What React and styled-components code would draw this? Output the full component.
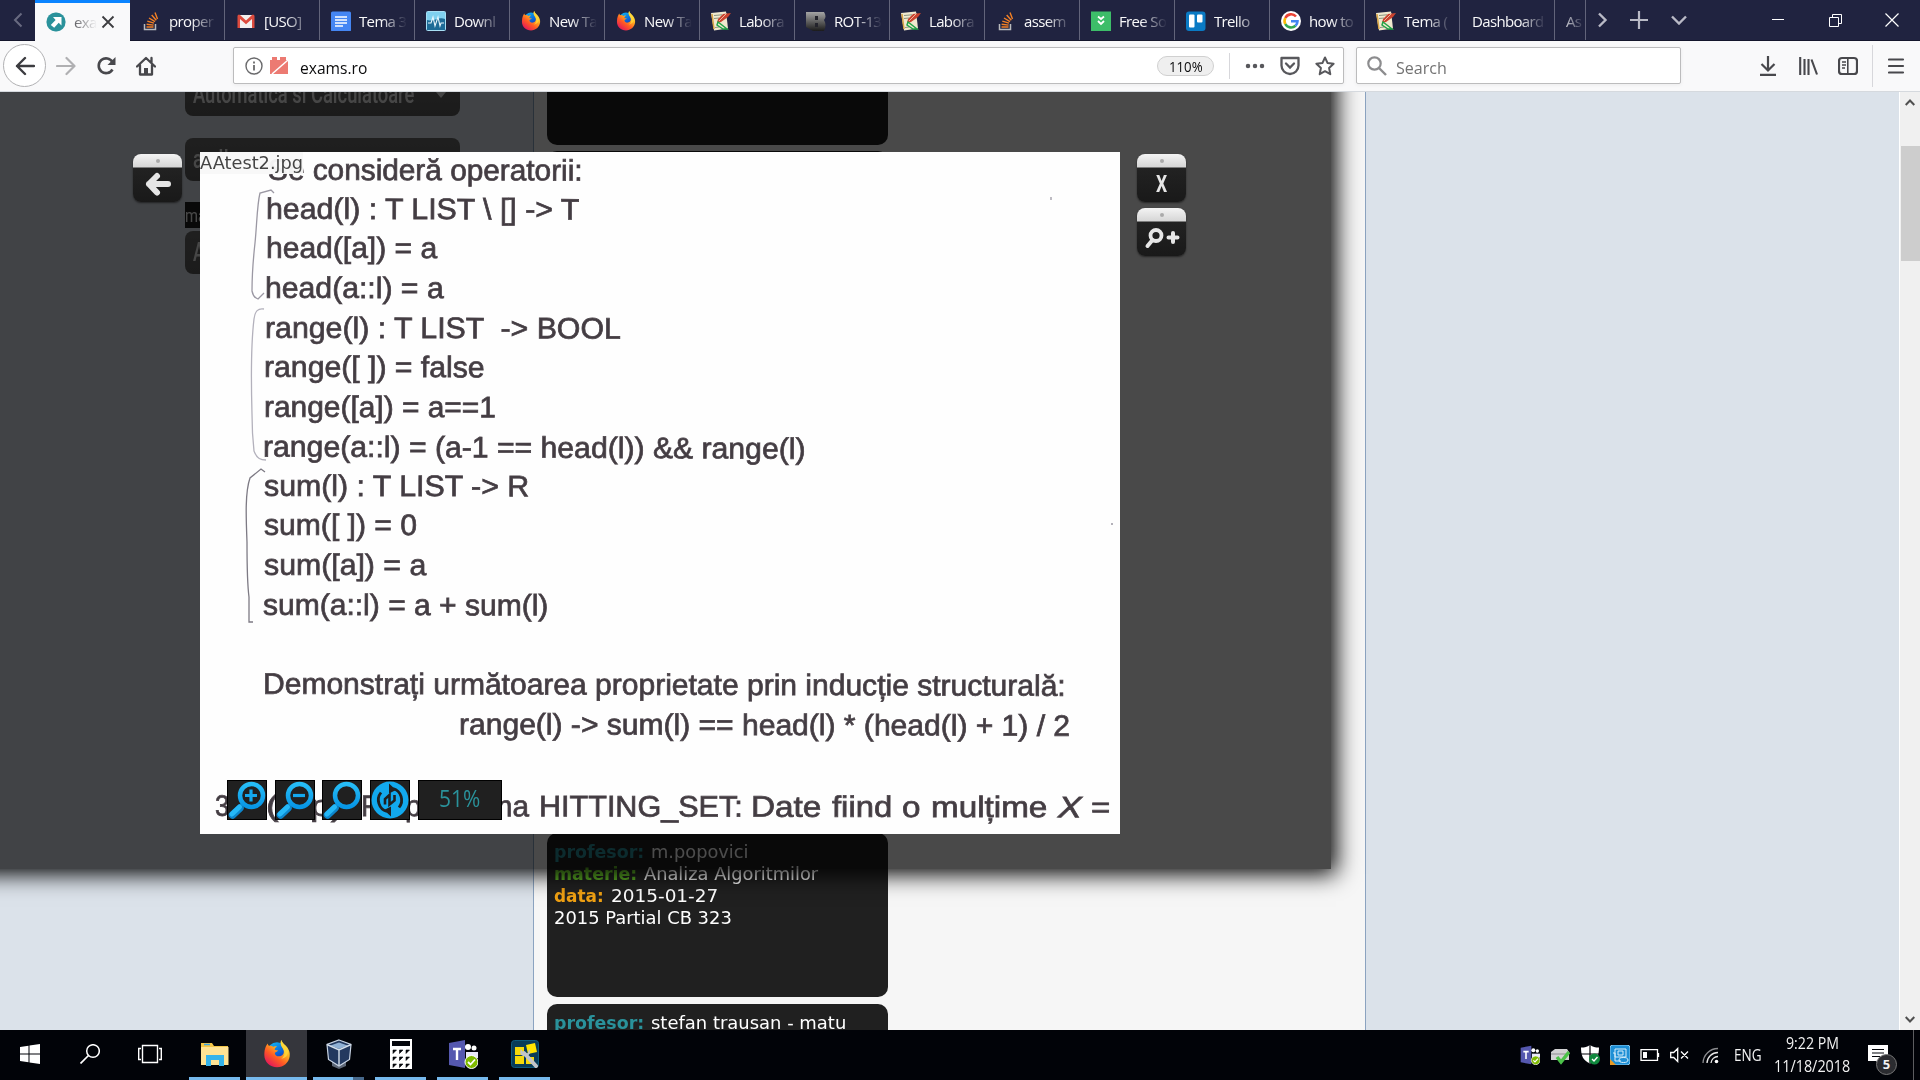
import React, { useLayoutEffect, useRef, useState } from 'react';
import styled, { createGlobalStyle } from 'styled-components';

const GlobalStyle = createGlobalStyle`
  * { box-sizing: border-box; }
  body { margin: 0; overflow: hidden; font-family: "Open Sans", "Noto Sans", sans-serif; }
  svg { display: block; flex: none; }
`;

/* ---------- text that is condensed to a known width ---------- */
const FitBox = styled.span`
  display: inline-block;
  flex: none;
  white-space: pre;
  margin-left: ${(p) => p.$ml || 0}px;
`;
const FitInner = styled.span`
  display: inline-block;
  transform-origin: 0 50%;
`;
function Fit({ width, ml, children }) {
  const ref = useRef(null);
  const [scale, setScale] = useState(1);
  useLayoutEffect(() => {
    setScale(width / ref.current.offsetWidth);
  }, [width]);
  return (
    <FitBox $ml={ml} style={{ width }}>
      <FitInner ref={ref} style={{ transform: `scaleX(${scale})` }}>{children}</FitInner>
    </FitBox>
  );
}

/* ---------- icons ---------- */
const Glyph = ({ w = 20, h = w, vb = `0 0 ${w} ${h}`, children, ...rest }) => (
  <svg width={w} height={h} viewBox={vb} fill="none" {...rest}>{children}</svg>
);

const Firefox = ({ size = 20 }) => (
  <Glyph w={size} vb="0 0 32 32">
    <defs>
      <linearGradient id="ffBody" x1="0.85" y1="0.05" x2="0.2" y2="0.95">
        <stop offset="0" stopColor="#fff04a" />
        <stop offset="0.35" stopColor="#ffb01f" />
        <stop offset="0.65" stopColor="#ff5a24" />
        <stop offset="1" stopColor="#e3175b" />
      </linearGradient>
      <linearGradient id="ffGlobe" x1="0.2" y1="0" x2="0.7" y2="1">
        <stop offset="0" stopColor="#0fb4f5" />
        <stop offset="0.6" stopColor="#0a62d8" />
        <stop offset="1" stopColor="#2a2a9a" />
      </linearGradient>
    </defs>
    <circle cx="16" cy="13.5" r="11" fill="url(#ffGlobe)" />
    <path d="M3 8c1-2 1.500-3 2.200-4 .3 1.200.8 2 1.500 2.600 2-.4 4 .2 5.300 1.200 1.500-.6 3-.7 4-.4-1.800 1-2.600 2.300-2.600 3.600 1 .6 2.600.4 3.600.6-.3 1.600-2.600 2-3.500 3.200.2 2.800 2.800 4.400 6 3.700 4.200-1 5.200-5 3.600-8-1.200-2.800-3-4-3-7.500 0-1 .4-2 1-3 .8 4 4.500 5 6.800 8.700C30 12 31 15 30.500 18.500 29.500 26 23.500 31 16 31 8 31 1.500 25 1.500 17c0-3.500.5-6.500 1.500-9z" fill="url(#ffBody)" />
    <path d="M21.100 0c-2.100 5 .9 7.500 2.500 11 2 4.500.5 8.500-3 10.500 5-.5 8.400-4 8-9C28 7 22.500 6 21.100 0z" fill="#ffd83a" opacity=".8" />
  </Glyph>
);
const ExamsIcon = () => (
  <Glyph vb="0 0 20 20">
    <rect x=".5" y=".5" width="19" height="19" rx="9" fill="#2a929b" />
    <path d="M7 5h8.500v8.500l-2.800-2.800-4.500 5-3.400-2.800 4.800-5z" fill="#fff" />
  </Glyph>
);
const StackIcon = () => (
  <Glyph vb="0 0 20 20">
    <path d="M3.500 13v5.500h11V13" stroke="#b9babd" strokeWidth="1.500" />
    <path d="M5.500 16h7M5.600 13.300l7 .8M6.300 10.200l6.700 2M8 7l6 3.600M10.700 4l4.600 5.200M14 1.500l2.500 6.500" stroke="#f48024" strokeWidth="1.400" />
  </Glyph>
);
const GmailIcon = () => (
  <Glyph vb="0 0 20 20">
    <rect x="2" y="4" width="16" height="13" rx="1" fill="#f3f0ef" />
    <path d="M1.500 5a1.500 1.500 0 0 1 2.500-1l6 5.500L16 4a1.500 1.500 0 0 1 2.500 1v12H16V8l-6 5.200L4 8v9H1.500z" fill="#dd4b3e" />
  </Glyph>
);
const DocsIcon = () => (
  <Glyph vb="0 0 20 20">
    <rect y=".5" width="20" height="20" rx="1.500" fill="#4586f3" />
    <path d="M4 6h12M4 9h12M4 12h12M4 15h8" stroke="#fff" strokeWidth="1.500" />
  </Glyph>
);
const WaveIcon = () => (
  <Glyph vb="0 0 20 20">
    <rect x=".5" y=".5" width="19" height="19" rx="1" fill="#1d6b97" stroke="#a8dff4" />
    <path d="M1 1h18v7c-6-3-12 3-18 1z" fill="#7fd0ef" />
    <path d="M2 12h3l2-6 2 9 3-9 2 9 1-3h3" stroke="#e9f7fd" strokeWidth="1.100" />
  </Glyph>
);
const NotesIcon = () => (
  <Glyph vb="0 0 20 20">
    <path d="M0 2l15-1.500 2 17L3 19.500z" fill="#f0e9cf" />
    <path d="M3 4.500l8-.7M3 7.500l5-.5M4 16.500l4-.5" stroke="#8a957f" />
    <path d="M20 2L12 3 7 8l-1 4 4-1 7-5z" fill="#c9432f" />
    <path d="M15.500 2.500L8 10" stroke="#f0b49a" strokeWidth="1" />
    <path d="M7 11l9 7h-4l-6-4z" stroke="#21a447" strokeWidth="1.500" />
    <path d="M1 3l2 15" stroke="#d8a444" strokeWidth="1.500" />
  </Glyph>
);
const RotIcon = () => (
  <Glyph vb="0 0 20 20">
    <defs>
      <linearGradient id="rot" x1="0" y1="0" x2="0" y2="1">
        <stop offset="0" stopColor="#a5a5a5" /><stop offset="1" stopColor="#1b1b1b" />
      </linearGradient>
    </defs>
    <path d="M0 1h18c2 3 2 6 0 8 2 3 2 7 0 11H7L0 16z" fill="url(#rot)" />
    <path d="M9 5h3v4H9zM9 12h3v4H9z" fill="#24242c" />
  </Glyph>
);
const GreenIcon = () => (
  <Glyph vb="0 0 20 20">
    <rect y=".5" width="20" height="19.500" fill="#3dbd69" />
    <path d="M7 5.500l3 2.500 3-2.500M7 10l3 3 3-3" stroke="#fff" strokeWidth="1.800" />
  </Glyph>
);
const TrelloIcon = () => (
  <Glyph vb="0 0 20 20">
    <rect y=".5" width="19.500" height="19.500" rx="3" fill="#0a7ac4" />
    <rect x="3" y="3.500" width="5.500" height="13" rx="1" fill="#fff" />
    <rect x="11" y="3.500" width="5.500" height="8" rx="1" fill="#fff" />
  </Glyph>
);
const GoogleIcon = () => (
  <Glyph vb="0 0 20 20">
    <circle cx="10" cy="10" r="10" fill="#fff" />
    <path d="M15 5.500A6.500 6.500 0 0 0 4.300 7" stroke="#ea4335" strokeWidth="2.600" />
    <path d="M4.300 7a6.500 6.500 0 0 0 0 6" stroke="#fbbc05" strokeWidth="2.600" />
    <path d="M4.300 13a6.500 6.500 0 0 0 10.200 1.700" stroke="#34a853" strokeWidth="2.600" />
    <path d="M14.500 14.700a6.300 6.300 0 0 0 2-4.500H10" stroke="#4285f4" strokeWidth="2.600" />
  </Glyph>
);

/* ---------- window chrome ---------- */
const Screen = styled.div`
  width: 1920px;
  height: 1080px;
  display: flex;
  flex-direction: column;
  overflow: hidden;
`;
const TabStrip = styled.div`
  height: 41px;
  flex: none;
  display: flex;
  background: #202340;
  border-bottom: 1px solid #14162c;
  color: #f9f9fa;
`;
const StripArrow = styled.div`
  width: 35px;
  display: flex;
  align-items: center;
  justify-content: center;
`;
const Tab = styled.div`
  width: ${(p) => p.$w || 95}px;
  height: ${(p) => (p.$active ? 41 : 40)}px;
  flex: none;
  display: flex;
  align-items: center;
  padding: 2px 0 0 11px;
  overflow: hidden;
  background: ${(p) => (p.$active ? '#f9f9fa' : 'transparent')};
  color: ${(p) => (p.$active ? '#4a4a4f' : '#f9f9fa')};
  border-top: ${(p) => (p.$active ? '3px solid #0a84ff' : '0')};
  padding-top: ${(p) => (p.$active ? 0 : 2)}px;
  border-right: ${(p) => (p.$active ? '0' : '1px solid #62647a')};
`;
const TabTitle = styled.span`
  width: ${(p) => p.$w || 45}px;
  margin-left: ${(p) => p.$ml ?? 8}px;
  overflow: hidden;
  white-space: nowrap;
  font-size: 15px;
  letter-spacing: -0.65px;
  mask-image: linear-gradient(to right, #000 ${(p) => (p.$w || 45) - 26}px, transparent 100%);
`;
const StripTools = styled.div`
  flex: 1;
  display: flex;
  align-items: center;
  padding-left: 11px;
`;
const ChromeGap = styled.span`
  width: ${(p) => p.$w}px;
  flex: none;
`;

const Toolbar = styled.div`
  height: 51px;
  flex: none;
  display: flex;
  align-items: center;
  background: #f9f9fa;
  border-bottom: 1px solid #d5d9de;
  padding: 0 15px 1px 3px;
`;
const BackButton = styled.div`
  width: 43px;
  height: 43px;
  border: 1px solid #b1b1b3;
  border-radius: 50%;
  background: #fff;
  display: grid;
  place-items: center;
  margin-right: 10px;
`;
const NavIcons = styled.div`
  display: flex;
  gap: 20px;
  width: 177px;
  align-items: center;
`;
const Field = styled.div`
  width: ${(p) => p.$w}px;
  height: 37px;
  flex: none;
  display: flex;
  align-items: center;
  background: #fff;
  border: 1px solid #bcbcbd;
  border-radius: 2px;
  box-shadow: 0 1px 4px rgba(0, 0, 0, 0.06);
  padding: 0 8px 0 ${(p) => p.$pl}px;
  margin-right: 12px;
  font-size: 17px;
  color: ${(p) => p.$color};
`;
const FieldText = styled.span`
  padding-top: 3px;
`;
const Zoomed = styled.span`
  width: 57px;
  height: 20px;
  border-radius: 10px;
  border: 1px solid #d0d0d0;
  background: #efefef;
  display: grid;
  place-items: center;
  font-size: 14px;
  line-height: 19px;
  margin-left: auto;
`;
const Divider = styled.span`
  width: 1px;
  height: ${(p) => p.$h}px;
  background: #d7d7db;
  margin: 0 15px 0 ${(p) => p.$ml ?? 15}px;
`;
const FieldActions = styled.div`
  display: flex;
  gap: 15px;
  align-items: center;
`;
const RightTools = styled.div`
  display: flex;
  align-items: center;
  margin-left: auto;
`;

/* ---------- page ---------- */
const Viewport = styled.div`
  height: 938px;
  flex: none;
  display: flex;
  position: relative;
  overflow: hidden;
  background: #dbe2ea;
`;
const Filters = styled.aside`
  width: 533px;
  flex: none;
  padding-left: 185px;
  display: flex;
  flex-direction: column;
  font-family: Roboto, sans-serif;
`;
const Select = styled.div`
  width: 275px;
  height: 43px;
  flex: none;
  border-radius: 8px;
  background: linear-gradient(#6a6a6a, #5c5c5c);
  color: #ececec;
  display: flex;
  align-items: center;
  padding: 0 14px 0 8px;
  font-size: 25px;
  font-weight: 500;
  margin-top: ${(p) => p.$mt}px;
  justify-content: space-between;
`;
const FilterLabel = styled.div`
  width: 64px;
  height: 26px;
  background: #202020;
  color: #f0f0f0;
  font-size: 19px;
  line-height: 28px;
  margin-top: 21px;
`;
const Content = styled.main`
  width: 833px;
  flex: none;
  background: #f6f6f6;
  border: solid #8ba3c0;
  border-width: 0 1px;
  padding-left: 13px;
`;
const Card = styled.article`
  width: 341px;
  height: 164px;
  border-radius: 10px;
  background: #202020;
  color: #fff;
  padding: 8px 7px;
  margin-bottom: 6.500px;
  font-family: Verdana, "DejaVu Sans", sans-serif;
  font-size: 17.600px;
  line-height: 22px;
`;
const CardList = styled.div`
  margin-top: -111.500px;
`;
const CardLine = styled.div`
  height: 22px;
  display: flex;
`;
const Key = styled.b`
  color: ${(p) => p.$c};
  margin-right: 7px;
`;
const Scrollbar = styled.div`
  width: 21px;
  margin-left: auto;
  background: #f0f0f0;
  border-left: 1px solid #fff;
  display: flex;
  flex-direction: column;
  align-items: center;
  padding: 7px 0 7px;
`;
const Thumb = styled.div`
  width: 19px;
  height: 115px;
  background: #cdcdcd;
  margin: 40px 0 auto;
`;

/* ---------- viewer ---------- */
const Lightbox = styled.section`
  position: absolute;
  left: -40px;
  top: -40px;
  width: 1371px;
  height: 817px;
  padding: 100px 0 0 173px;
  display: flex;
  background: rgba(0, 0, 0, 0.7);
  box-shadow: 5px 5px 22px #000;
`;
const Rail = styled.div`
  display: flex;
  flex-direction: column;
  gap: 6px;
  padding-top: 2px;
  width: ${(p) => p.$w}px;
  flex: none;
  align-items: flex-end;
`;
const RailButton = styled.div`
  width: 49px;
  height: 48px;
  flex: none;
  border-radius: 8px;
  background: linear-gradient(#f4f4f4 0, #d6d6d6 13px, #222 14px, #191919 100%);
  box-shadow: 0 1px 2px rgba(0, 0, 0, 0.5);
  display: flex;
  flex-direction: column;
  align-items: center;
  padding-top: 5px;
  color: #e6e6e6;
`;
const Hole = styled.i`
  width: 4px;
  height: 4px;
  border-radius: 50%;
  background: #aaa;
  margin-bottom: ${(p) => p.$mb ?? 8}px;
`;
const CloseMark = styled.b`
  font: 700 24px/24px Roboto, sans-serif;
`;
const Scan = styled.div`
  position: relative;
  width: 920px;
  height: 682px;
  flex: none;
  overflow: hidden;
  background: #fefefe;
  color: #433c42;
  font-family: "Liberation Sans", Arial, sans-serif;
  font-size: 29.500px;
  line-height: 30px;
  -webkit-text-stroke: 0.750px #4a4349;
`;
const ScanLine = styled.div`
  display: flex;
  align-items: flex-end;
  height: ${(p) => p.$h}px;
  transform: rotate(${(p) => p.$r ?? 0.15}deg);
  transform-origin: 200px 100%;
`;
const Brackets = styled.svg`
  position: absolute;
  left: 0;
  top: 0;
`;
const FileName = styled.div`
  position: absolute;
  left: 0;
  top: 0;
  height: 22px;
  background: rgba(248, 248, 248, 0.96);
  color: #444;
  -webkit-text-stroke: 0;
  font: 17.600px/23px Verdana, "DejaVu Sans", sans-serif;
`;
const ZoomBar = styled.div`
  position: absolute;
  left: 27px;
  top: 628px;
  display: flex;
  gap: 7.700px;
`;
const ZoomButton = styled.div`
  width: ${(p) => p.$w || 40}px;
  height: 40px;
  border: 1px solid #000;
  background: #202020;
  color: #2a929b;
  display: grid;
  place-items: center;
  -webkit-text-stroke: 0;
  font: 24px/32px "Open Sans", sans-serif;
  padding-bottom: ${(p) => (p.$w ? 4 : 0)}px;
`;
const Italic = styled.i``;

const LINES = [
  { b: 180, parts: [[268, 315, 'Se consideră operatorii:']] },
  { b: 219, parts: [[266, 313, 'head(l) : T LIST \\ [] -> T']] },
  { b: 258, parts: [[266, 171, 'head([a]) = a']] },
  { b: 298, parts: [[265, 179, 'head(a::l) = a']] },
  { b: 338, parts: [[265, 356, 'range(l) : T LIST  -> BOOL']] },
  { b: 377, parts: [[264, 221, 'range([ ]) = false']] },
  { b: 417, parts: [[264, 232, 'range([a]) = a==1']] },
  { b: 457, r: 0.25, parts: [[263, 542, 'range(a::l) = (a-1 == head(l)) && range(l)']] },
  { b: 495.5, parts: [[264, 265, 'sum(l) : T LIST -> R']] },
  { b: 535, parts: [[264, 153, 'sum([ ]) = 0']] },
  { b: 575, parts: [[264, 162, 'sum([a]) = a']] },
  { b: 615, parts: [[263, 285, 'sum(a::l) = a + sum(l)']] },
  { b: 694, parts: [[263, 803, 'Demonstrați următoarea proprietate prin inducție structurală:']] },
  { b: 734, parts: [[459, 611, 'range(l) -> sum(l) == head(l) * (head(l) + 1) / 2']] },
  {
    b: 815.5,
    r: 0.1,
    parts: [
      [215, 22, '3.'], [266, 78, '(2 p)'], [361, 39, 'Fie'], [405, 124, 'problema'],
      [539, 204, 'HITTING_SET:'], [751, 70, 'Date'], [832, 60, 'fiind'], [902, 18, 'o'],
      [931, 116, 'mulțime'], [1058, 24, 'X', true], [1091, 19, '='],
    ],
  },
];
const DESCENT = 4.6;

function Page() {
  let prev = 152 - DESCENT;
  return (
    <Scan>
      {LINES.map((l) => {
        const h = l.b - prev;
        prev = l.b;
        let x = 200;
        return (
          <ScanLine key={l.b} $h={h} $r={l.r}>
            {l.parts.map(([left, w, text, it]) => {
              const ml = left - x;
              x = left + w;
              return <Fit key={left} width={w} ml={ml}>{it ? <Italic>{text}</Italic> : text}</Fit>;
            })}
          </ScanLine>
        );
      })}
      <Brackets width="920" height="682" viewBox="200 152 920 682" fill="none" stroke="#9b98a3" strokeWidth="1.300">
        <path d="M274 193l-3-3-11 3c-3 12-3 30-5 50-2 18-3 32-3 48 1 5 3 7 6 8l6-6" />
        <path d="M264 309c-6-1-9 2-10 10-3 25-3 60-2 95 0 15 1 28 2 37 3 8 7 9 12 9" stroke="#b3b1bc" />
        <path d="M265 472l-4-3-11 9c-5 14-4 39-3 64 0 22 0 40 2 55v25h4" stroke="#7d7a84" />
        <path d="M1051 197v3M1111 524h2" />
      </Brackets>
      <FileName><Fit width={103}>AAtest2.jpg</Fit></FileName>
      <ZoomBar>
        <ZoomButton><Magnifier sign="M17 14.500h12M23 8.500v12" /></ZoomButton>
        <ZoomButton><Magnifier sign="M17 14.500h12" /></ZoomButton>
        <ZoomButton><Magnifier solid /></ZoomButton>
        <ZoomButton>
          <Glyph w={38} vb="0 0 38 38">
            <circle cx="19" cy="19" r="18.500" fill="#12a9ee" />
            <path d="M16 30.500A12 12 0 0 1 10 11.500M22 7.500A12 12 0 0 1 28 26.500" stroke="#202020" strokeWidth="2.800" />
            <path d="M18 2.500v10L25 9zM20 35.500v-10L13 29z" fill="#202020" />
            <path d="M14 23.500V18l4.500-4v9.500l5-4V14" stroke="#202020" strokeWidth="2.600" />
          </Glyph>
        </ZoomButton>
        <ZoomButton $w={84}><Fit width={41}>51%</Fit></ZoomButton>
      </ZoomBar>
    </Scan>
  );
}

const Magnifier = ({ sign, solid }) => (
  <Glyph w={38} vb="0 0 38 38">
    <defs>
      <linearGradient id="lens" x1="0" y1="0" x2="0" y2="1">
        <stop offset="0" stopColor="#26bdf7" /><stop offset="1" stopColor="#0796e6" />
      </linearGradient>
    </defs>
    <path d="M12 27L4.500 34" stroke="#0c86cc" strokeWidth="7.500" strokeLinecap="round" />
    <path d="M15 22.500L11 27" stroke="#0c7fc0" strokeWidth="4" />
    <path d="M11.500 26L4 33" stroke="#25b8f7" strokeWidth="5" strokeLinecap="round" />
    <circle cx="23.500" cy="14.500" r="11.500" stroke="url(#lens)" strokeWidth="4.500" fill="#202020" />
    {!solid && <path d={sign} stroke="#14a8ee" strokeWidth="3.200" />}
  </Glyph>
);

/* ---------- taskbar ---------- */
const Taskbar = styled.footer`
  height: 50px;
  flex: none;
  display: flex;
  background: #010308;
  color: #f2f2f2;
`;
const TaskItem = styled.div`
  width: ${(p) => p.$w}px;
  flex: none;
  margin-right: ${(p) => p.$mr ?? 11}px;
  background: ${(p) => (p.$on ? '#35363c' : 'transparent')};
  display: grid;
  grid-template-rows: 1fr 3px;
  place-items: center;
`;
const RunMark = styled.span`
  width: 100%;
  height: 3px;
  background: ${(p) => (p.$stacked ? 'linear-gradient(to right, #76b9ed 40px, #47698c 40px)' : '#76b9ed')};
`;
const Tray = styled.div`
  margin-left: auto;
  width: 400px;
  display: flex;
  align-items: center;
  gap: 10px;
  font-size: 15.500px;
`;
const Clock = styled.div`
  display: flex;
  flex-direction: column;
  align-items: center;
  width: 76px;
  margin-left: 2px;
  line-height: 23px;
`;
const Notices = styled.div`
  display: flex;
  margin: 10px 0 0 8px;
`;
const Count = styled.b`
  width: 21px;
  height: 21px;
  border-radius: 50%;
  border: 1px solid #777;
  background: #2b2c30;
  font-size: 13px;
  line-height: 18px;
  text-align: center;
  margin: 9px 0 0 -12px;
`;
const Peek = styled.span`
  width: 1px;
  height: 50px;
  background: #5c5d60;
  margin-left: 6px;
`;

const Teams = ({ size }) => (
  <Glyph w={size} vb="0 0 30 30">
    <path d="M1 4L17 1v28L1 26z" fill="#5558af" />
    <path d="M5 10h8M9 10v11" stroke="#fff" strokeWidth="2.400" />
    <circle cx="20" cy="8" r="3" fill="#fff" /><circle cx="26" cy="9" r="2.500" fill="#fff" />
    <path d="M18 13h12v6H18z" fill="#e8e8f8" />
    <circle cx="23.500" cy="23" r="6.500" fill="#7fba00" stroke="#fff" />
    <path d="M20 23l2.500 2.500L27 20.500" stroke="#fff" strokeWidth="1.800" />
  </Glyph>
);

const TABS = [
  [StackIcon, 'proper'], [GmailIcon, '[USO] '], [DocsIcon, 'Tema 3'], [WaveIcon, 'Downl'],
  [Firefox, 'New Ta'], [Firefox, 'New Ta'], [NotesIcon, 'Labora'], [RotIcon, 'ROT-13'],
  [NotesIcon, 'Labora'], [StackIcon, 'assem'], [GreenIcon, 'Free So'], [TrelloIcon, 'Trello'],
  [GoogleIcon, 'how to'], [NotesIcon, 'Tema ('],
];

export default function App() {
  return (
    <Screen>
      <GlobalStyle />
      <TabStrip>
        <StripArrow>
          <Glyph w={10} h={16}><path d="M8.500 1.500L2 8l6.500 6.500" stroke="#686a80" strokeWidth="2" /></Glyph>
        </StripArrow>
        <Tab $active>
          <ExamsIcon />
          <TabTitle $w={23}>exa</TabTitle>
          <ChromeGap $w={4} />
          <Glyph w={14}><path d="M1.500 1.500l11 11M12.500 1.500l-11 11" stroke="#3d3d40" strokeWidth="1.800" /></Glyph>
        </Tab>
        {TABS.map(([Icon, title], i) => (
          <Tab key={i}><Icon /><TabTitle $w={48}>{title}</TabTitle></Tab>
        ))}
        <Tab><TabTitle $ml={1} $w={74}>Dashboard</TabTitle></Tab>
        <Tab $w={31}><TabTitle $ml={0} $w={20}>As</TabTitle></Tab>
        <StripTools>
          <Glyph w={11} h={16}><path d="M2 1.500L8.500 8 2 14.500" stroke="#b9bac6" strokeWidth="2.400" /></Glyph>
          <ChromeGap $w={22} />
          <Glyph w={18}><path d="M9 0v18M0 9h18" stroke="#b9bac6" strokeWidth="2.200" /></Glyph>
          <ChromeGap $w={23} />
          <Glyph w={16} h={10}><path d="M1 1.500l7 7 7-7" stroke="#b9bac6" strokeWidth="2.400" /></Glyph>
          <ChromeGap $w={85} />
          <Glyph w={12}><path d="M0 5.500h12" stroke="#fff" /></Glyph>
          <ChromeGap $w={45} />
          <Glyph w={13}><path d="M.5 3.500h9v9h-9zM3.500 3.500v-3h9v9h-3" stroke="#fff" /></Glyph>
          <ChromeGap $w={43} />
          <Glyph w={14}><path d="M.5.5l13 13M13.500.5l-13 13" stroke="#fff" strokeWidth="1.200" /></Glyph>
        </StripTools>
      </TabStrip>

      <Toolbar>
        <BackButton>
          <Glyph w={20}><path d="M19 10H2M10 2l-8 8 8 8" stroke="#3c3c40" strokeWidth="2.400" strokeLinejoin="round" strokeLinecap="round" /></Glyph>
        </BackButton>
        <NavIcons>
          <Glyph w={20}><path d="M1 10h17M10.500 2l8 8-8 8" stroke="#b0b0b2" strokeWidth="2.200" strokeLinejoin="round" strokeLinecap="round" /></Glyph>
          <Glyph w={20}>
            <path d="M16.500 13.500A7.400 7.400 0 1 1 16.500 6" stroke="#48484c" strokeWidth="2.600" />
            <path d="M19.500 1v8h-8z" fill="#48484c" />
          </Glyph>
          <Glyph w={20}>
            <path d="M1 10.500L10 2l9 8.500M4 9v9.500h12V9M15.500 2v5" stroke="#48484c" strokeWidth="2.300" strokeLinejoin="round" strokeLinecap="round" />
            <path d="M8 12h4v6H8z" fill="#48484c" />
          </Glyph>
        </NavIcons>
        <Field $w={1111} $pl={11} $color="#0c0c0d">
          <Glyph w={18}>
            <circle cx="9" cy="9" r="8" stroke="#6a6a6c" strokeWidth="1.400" />
            <path d="M9 8v5.500M9 4.500v2" stroke="#6a6a6c" strokeWidth="1.800" />
          </Glyph>
          <ChromeGap $w={7} />
          <Glyph w={19}>
            <path d="M0 4h18v14H0zM2 1h5v3H2zM10 1h6v3h-6z" fill="#ec7a72" />
            <path d="M18 4L2 18" stroke="#fff" strokeWidth="1.500" />
          </Glyph>
          <FieldText><Fit width={67} ml={11}>exams.ro</Fit></FieldText>
          <Zoomed><Fit width={34}>110%</Fit></Zoomed>
          <Divider $h={26} />
          <FieldActions>
            <Glyph w={20}><path d="M3 10h.01M10 10h.01M17 10h.01" stroke="#58585c" strokeWidth="4.500" strokeLinecap="round" /></Glyph>
            <Glyph w={20}>
              <path d="M1.500 2h17v7.500a8.500 8.500 0 0 1-17 0z" stroke="#58585c" strokeWidth="2.300" strokeLinejoin="round" />
              <path d="M6 7.500l4 4 4-4" stroke="#58585c" strokeWidth="2.300" strokeLinecap="round" />
            </Glyph>
            <Glyph w={20}><path d="M10 1.500l2.600 5.600 6 .7-4.500 4.200 1.200 6.200L10 15.200l-5.300 3 1.200-6.200L1.400 7.800l6-.7z" stroke="#58585c" strokeWidth="2" strokeLinejoin="round" /></Glyph>
          </FieldActions>
        </Field>
        <Field $w={325} $pl={10} $color="#737373">
          <Glyph w={20}>
            <circle cx="7.500" cy="7.500" r="6.200" stroke="#8c8c8e" strokeWidth="2.200" />
            <path d="M12 12l7 7" stroke="#8c8c8e" strokeWidth="2.400" />
          </Glyph>
          <FieldText><Fit width={51} ml={9}>Search</Fit></FieldText>
        </Field>
        <RightTools>
          <Glyph w={16} h={20}><path d="M8 0v14M1.500 8L8 14.500 14.500 8M0 18.800h16" stroke="#48484c" strokeWidth="2.200" /></Glyph>
          <ChromeGap $w={23} />
          <Glyph w={20}><path d="M1.200 1v18M5.500 3v16M9.500 3v16M12.500 3.500L18 18.500" stroke="#48484c" strokeWidth="2.100" /></Glyph>
          <ChromeGap $w={19} />
          <Glyph w={20}>
            <rect x="1" y="2" width="18" height="16" rx="3" stroke="#48484c" strokeWidth="2.200" />
            <path d="M9.800 2v16" stroke="#48484c" strokeWidth="1.600" />
            <path d="M4 6h4M4 9h4M4 12h3" stroke="#48484c" strokeWidth="1.300" />
          </Glyph>
          <Divider $h={42} $ml={14} />
          <Glyph w={17} h={18}><path d="M1 2.500h14M1 9h14M1 15.500h14" stroke="#48484c" strokeWidth="2.200" strokeLinecap="round" /></Glyph>
        </RightTools>
      </Toolbar>

      <Viewport>
        <Filters>
          <Select $mt={-19}>
            <Fit width={221}>Automatica si Calculatoare</Fit>
            <Glyph w={10} h={6}><path d="M0 0h10L5 6z" fill="#e6e6e6" /></Glyph>
          </Select>
          <Select $mt={22}><Fit width={36}>an II</Fit></Select>
          <FilterLabel><Fit width={50}>materie</Fit></FilterLabel>
          <Select $mt={3}><Fit width={160}>Analiza Algoritmilor</Fit></Select>
        </Filters>
        <Content>
          <CardList>
            {[0, 1, 2, 3, 4].map((i) => <Card key={i} />)}
            <Card>
              <CardLine><Key $c="#2a929b"><Fit width={90}>profesor:</Fit></Key><Fit width={97}>m.popovici</Fit></CardLine>
              <CardLine><Key $c="#5fb526"><Fit width={83}>materie:</Fit></Key><Fit width={174}>Analiza Algoritmilor</Fit></CardLine>
              <CardLine><Key $c="#f0a113"><Fit width={50}>data:</Fit></Key><Fit width={107}>2015-01-27</Fit></CardLine>
              <CardLine><Fit width={178}>2015 Partial CB 323</Fit></CardLine>
            </Card>
            <Card>
              <CardLine><Key $c="#2a929b"><Fit width={90}>profesor:</Fit></Key><Fit width={195}>stefan trausan - matu</Fit></CardLine>
            </Card>
          </CardList>
        </Content>
        <Scrollbar>
          <Glyph w={10} h={7}><path d="M.7 6L5 1.500 9.300 6" stroke="#505050" strokeWidth="2" /></Glyph>
          <Thumb />
          <Glyph w={10} h={7}><path d="M.7 1L5 5.500 9.300 1" stroke="#505050" strokeWidth="2" /></Glyph>
        </Scrollbar>

        <Lightbox>
          <Rail $w={49}>
            <RailButton>
              <Hole />
              <Glyph w={28} h={26}><path d="M13 5L5 13l8 8.500M5 13h19" stroke="#e6e6e6" strokeWidth="6" strokeLinecap="round" strokeLinejoin="round" /></Glyph>
            </RailButton>
          </Rail>
          <ChromeGap $w={18} />
          <Page />
          <Rail $w={66}>
            <RailButton><Hole $mb={9} /><CloseMark><Fit width={11}>X</Fit></CloseMark></RailButton>
            <RailButton>
              <Hole $mb={11} />
              <Glyph w={37} h={22}>
                <circle cx="13" cy="7.500" r="5.500" stroke="#e6e6e6" strokeWidth="3.800" />
                <path d="M9.500 12L4.500 18" stroke="#e6e6e6" strokeWidth="4" strokeLinecap="round" />
                <path d="M30 5v9M25.500 9.500h9" stroke="#e6e6e6" strokeWidth="4" strokeLinecap="round" />
              </Glyph>
            </RailButton>
          </Rail>
        </Lightbox>
      </Viewport>

      <Taskbar>
        <TaskItem $w={60} $mr={0}>
          <Glyph w={20}><path d="M0 3l8.500-1.300v7.800H0zM9.500 1.500L20 0v9.500H9.500zM0 10.500h8.500v7.800L0 17zM9.500 10.500H20V20L9.500 18.500z" fill="#fff" /></Glyph>
        </TaskItem>
        <TaskItem $w={60} $mr={0}>
          <Glyph w={20}><circle cx="13" cy="7" r="6.300" stroke="#fff" strokeWidth="1.500" /><path d="M8.500 11.500L.5 19.500" stroke="#fff" strokeWidth="1.700" /></Glyph>
        </TaskItem>
        <TaskItem $w={60} $mr={9}>
          <Glyph w={24} h={20}><path d="M4.500 1.500h15v17h-15zM3 4.500H.7v11H3M21 4.500h2.300v11H21" stroke="#fff" strokeWidth="1.400" /></Glyph>
        </TaskItem>
        <TaskItem $w={51} $mr={6}>
          <Glyph w={28} h={24}>
            <path d="M0 1h11l2 3h14v19H0z" fill="#f3c648" />
            <path d="M0 5h27.500v18H0z" fill="#ffe394" />
            <path d="M5 24V13h18v11h-5v-6h-8v6z" fill="#35b3ea" />
            <path d="M3 2.500h6" stroke="#3fa4dd" strokeWidth="1.500" />
          </Glyph>
          <RunMark />
        </TaskItem>
        <TaskItem $w={61} $mr={6} $on><Firefox size={28} /><RunMark /></TaskItem>
        <TaskItem $w={51}>
          <Glyph w={26} h={30}>
            <path d="M6 22h14v5l-7 3-7-3z" fill="#5d6777" />
            <path d="M13 1l12 4.500-1.500 15L13 27 2.500 20.500 1 5.500z" fill="#23395f" stroke="#c8d4e4" strokeWidth="1.200" />
            <path d="M13 3.500l8.500 3L13 10 4.500 6.500z" fill="#8fb0d4" />
            <path d="M1 5.500L13 11l12-5.500M13 11v15" stroke="#d5e0ec" strokeWidth="1.400" />
          </Glyph>
          <RunMark $stacked />
        </TaskItem>
        <TaskItem $w={51}>
          <Glyph w={22} h={30}>
            <path d="M0 0h22v30H0z" fill="#fff" />
            <path d="M2 2h18v5H2z" fill="#05070c" />
            <path d="M3 11h3.500L3 14.500zM9.500 11H13l-3.500 3.500zM16 11h3.500L16 14.500zM3 18h3.500L3 21.500zM9.500 18H13l-3.500 3.500zM16 18h3.500L16 21.500zM3 25h3.500L3 28.500zM9.500 25H13l-3.500 3.500zM16 25h3.500L16 28.500z" fill="#05070c" stroke="#05070c" strokeWidth=".6" />
          </Glyph>
          <RunMark />
        </TaskItem>
        <TaskItem $w={51}><Teams size={30} /><RunMark /></TaskItem>
        <TaskItem $w={51}>
          <Glyph w={28} h={28}>
            <rect x=".5" y=".5" width="27" height="27" rx="3" fill="#083c58" stroke="#0f5b7d" />
            <path d="M4 7h9v8H4zM4 16h9v8H4zM15 17h8v7h-8z" fill="#f5d90a" />
            <path d="M15 5l9-2 2 9-9 2z" fill="#ffe600" />
            <path d="M13 13l12 13" stroke="#c2c5ca" strokeWidth="4" strokeLinecap="round" />
            <path d="M10 9c-2 4 0 8 5 7s5-5 3-7l-1 4-4 1z" fill="#c2c5ca" />
          </Glyph>
          <RunMark />
        </TaskItem>
        <Tray>
          <Teams size={20} />
          <Glyph w={20}>
            <path d="M1 7l4-3h12l2 3v8H1z" fill="#d2d2d4" /><path d="M1 9h18" stroke="#8c8c90" />
            <path d="M7 12l4 5 8-10" stroke="#4cc24a" strokeWidth="3.500" />
          </Glyph>
          <Glyph w={20}>
            <path d="M10 0c3 2 5 2.500 9 2.500 0 8-2 13-9 16-7-3-9-8-9-16C5 2.500 7 2 10 0z" fill="#fff" />
            <path d="M10 0v18M1 9h18" stroke="#010308" strokeWidth="1.200" />
            <circle cx="14.500" cy="14" r="5.500" fill="#10893e" /><path d="M12 14l2 2 3.500-4" stroke="#fff" strokeWidth="1.400" />
          </Glyph>
          <Glyph w={20}>
            <rect width="20" height="20" rx="3" fill="#1e8fd5" stroke="#8ccbf0" />
            <path d="M5 4h11v8H5zM8 6h5v4H8zM3 8h2v8h6" stroke="#d7eefb" />
            <ellipse cx="13.500" cy="15" rx="4.500" ry="2.500" stroke="#d7eefb" /><path d="M0 14l6 6H0z" fill="#e89a24" />
          </Glyph>
          <Glyph w={20} h={12}><path d="M1 .7h16.500v10.600H1zM18.500 4v4" stroke="#fff" strokeWidth="1.300" /><path d="M3 3h4v6H3z" fill="#fff" /></Glyph>
          <Glyph w={19} h={16}><path d="M.7 5.500h3l4-4v13l-4-4h-3zM11 4.500l7 7M18 4.500l-7 7" stroke="#fff" strokeWidth="1.300" /></Glyph>
          <Glyph w={20} vb="-3 0 20 20">
            <path d="M1 18A15 15 0 0 1 16 3.500" stroke="#8a8b8e" strokeWidth="1.300" />
            <path d="M5 18A11 11 0 0 1 16 7.500M9 18a7 7 0 0 1 7-6.500" stroke="#e8e8e8" strokeWidth="1.300" /><circle cx="14.500" cy="16.500" r="1.800" fill="#fff" />
          </Glyph>
          <Fit width={28} ml={5}>ENG</Fit>
          <Clock><Fit width={53}>9:22 PM</Fit><Fit width={76}>11/18/2018</Fit></Clock>
          <Notices>
            <Glyph w={20} h={20}><path d="M0 0h20v16h-8v4l-4-4H0z" fill="#fff" /><path d="M4 4.500h12M4 8h12M4 11.500h8" stroke="#010308" strokeWidth="1.200" /></Glyph>
            <Count>5</Count>
          </Notices>
          <Peek />
        </Tray>
      </Taskbar>
    </Screen>
  );
}
